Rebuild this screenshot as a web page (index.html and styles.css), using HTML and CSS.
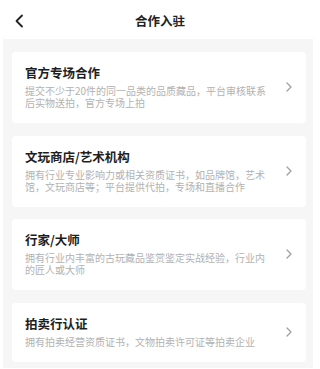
FILE: index.html
```html
<!DOCTYPE html>
<html lang="zh-CN">
<head>
<meta charset="utf-8">
<title>合作入驻</title>
<link rel="stylesheet" href="styles.css">
</head>
<body>
<header class="nav">
  <svg class="back" width="10" height="14" viewBox="0 0 10 14"><path d="M8 1.5 L2.5 7 L8 12.5" fill="none" stroke="#222" stroke-width="1.8" stroke-linecap="round" stroke-linejoin="round"/></svg>
  <h1 class="nav-title">合作入驻</h1>
</header>
<main class="panel">
  <div class="card">
    <div class="card-text">
      <div class="card-title">官方专场合作</div>
      <div class="card-desc">提交不少于20件的同一品类的品质藏品，平台审核联系后实物送拍，官方专场上拍</div>
    </div>
    <svg class="arrow" width="6" height="10" viewBox="0 0 6 10"><path d="M1 1 L5 5 L1 9" fill="none" stroke="#a0a0a0" stroke-width="1.3" stroke-linecap="round" stroke-linejoin="round"/></svg>
  </div>
  <div class="card">
    <div class="card-text">
      <div class="card-title">文玩商店/艺术机构</div>
      <div class="card-desc">拥有行业专业影响力或相关资质证书，如品牌馆，艺术馆，文玩商店等；平台提供代拍，专场和直播合作</div>
    </div>
    <svg class="arrow" width="6" height="10" viewBox="0 0 6 10"><path d="M1 1 L5 5 L1 9" fill="none" stroke="#a0a0a0" stroke-width="1.3" stroke-linecap="round" stroke-linejoin="round"/></svg>
  </div>
  <div class="card">
    <div class="card-text">
      <div class="card-title">行家/大师</div>
      <div class="card-desc">拥有行业内丰富的古玩藏品鉴赏鉴定实战经验，行业内的匠人或大师</div>
    </div>
    <svg class="arrow" width="6" height="10" viewBox="0 0 6 10"><path d="M1 1 L5 5 L1 9" fill="none" stroke="#a0a0a0" stroke-width="1.3" stroke-linecap="round" stroke-linejoin="round"/></svg>
  </div>
  <div class="card">
    <div class="card-text">
      <div class="card-title">拍卖行认证</div>
      <div class="card-desc">拥有拍卖经营资质证书，文物拍卖许可证等拍卖企业</div>
    </div>
    <svg class="arrow" width="6" height="10" viewBox="0 0 6 10"><path d="M1 1 L5 5 L1 9" fill="none" stroke="#a0a0a0" stroke-width="1.3" stroke-linecap="round" stroke-linejoin="round"/></svg>
  </div>
</main>
</body>
</html>
```

FILE: styles.css
```css
* { box-sizing: border-box; }
html, body {
  margin: 0;
  padding: 0;
  background: #ffffff;
  font-family: "Noto Sans CJK SC", "Noto Sans", sans-serif;
  color: #222;
}
.nav {
  position: relative;
  height: 39px;
  display: flex;
  align-items: center;
  justify-content: center;
}
.back {
  position: absolute;
  left: 14px;
  top: 14px;
}
.nav-title {
  margin: 0;
  font-size: 12.5px;
  font-weight: 700;
  line-height: 16px;
  margin-top: 2px;
  color: #222;
}
.panel {
  margin-left: 3px;
  width: 310px;
  height: 329px;
  background: #f6f6f6;
  padding: 13px 7px 0 9px;
  display: flex;
  flex-direction: column;
  gap: 12.5px;
}
.card {
  background: #fff;
  border-radius: 4px;
  padding: 13px 14px 14px 13px;
  display: flex;
  align-items: center;
}
.card-text {
  width: 245px;
  flex: none;
}
.card-title {
  font-size: 12.5px;
  font-weight: 700;
  line-height: 16px;
  color: #1e1e1e;
}
.card-desc {
  margin-top: 4px;
  font-size: 10px;
  line-height: 12px;
  color: #b2b2b2;
}
.arrow {
  margin-left: auto;
  flex: none;
}
```
